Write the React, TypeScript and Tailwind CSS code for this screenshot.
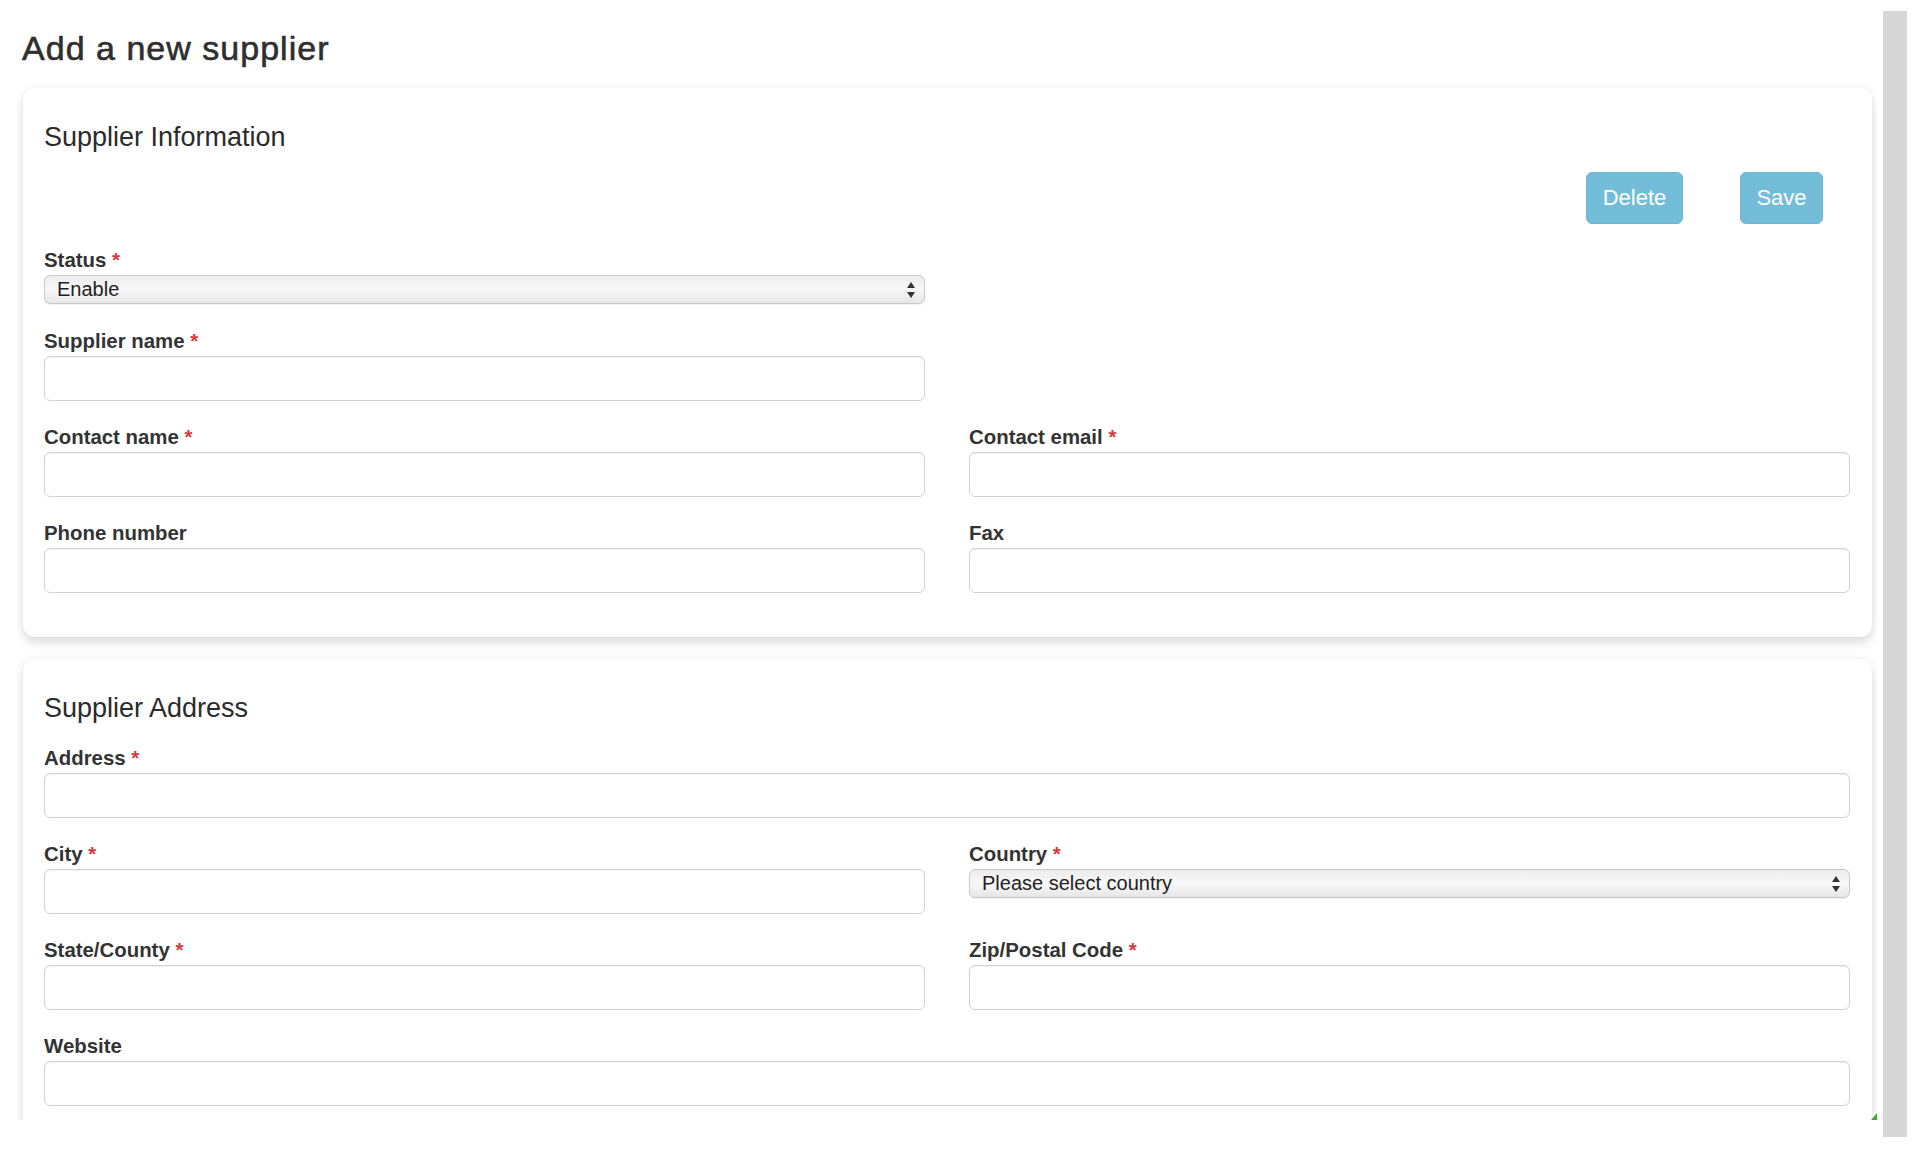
import React from "react";

function Req() {
  return <span className="text-[#d9363e]"> *</span>;
}

function Label({ text, req }: { text: string; req?: boolean }) {
  return (
    <label className="block text-[20.4px] leading-[20px] font-bold text-[#333] mb-[5px]">
      {text}
      {req ? <Req /> : null}
    </label>
  );
}

function TextInput() {
  return (
    <input
      type="text"
      className="block w-full h-[45px] rounded-[6px] border border-[#d2d2d2] bg-white shadow-[inset_0_1px_1px_rgba(0,0,0,0.06)] outline-none px-3 text-[20px]"
    />
  );
}

function FakeSelect({ value }: { value: string }) {
  return (
    <div className="relative w-full h-[29px]">
      <select
        defaultValue={value}
        className="appearance-none block w-full h-[29px] rounded-[6px] border border-[#c9c9c9] bg-linear-to-b from-[#ececec] via-[#f8f8f8] to-[#e6e6e6] shadow-[0_1px_1px_rgba(0,0,0,0.06)] pl-[12px] pr-8 text-[20px] leading-[27px] text-[#222] outline-none"
      >
        <option value={value}>{value}</option>
      </select>
      <svg
        className="absolute right-[10px] top-1/2 -translate-y-1/2 pointer-events-none"
        width="8"
        height="16"
        viewBox="0 0 8 16"
      >
        <polygon points="0,6 4,0 8,6" fill="#333" />
        <polygon points="0,10 8,10 4,16" fill="#333" />
      </svg>
    </div>
  );
}

function Field({
  label,
  req,
  select,
}: {
  label: string;
  req?: boolean;
  select?: string;
}) {
  return (
    <div>
      <Label text={label} req={req} />
      {select ? <FakeSelect value={select} /> : <TextInput />}
    </div>
  );
}

export default function App() {
  return (
    <div className="w-[1918px] h-[1166px] bg-white overflow-hidden font-['Liberation_Sans',Arial,Helvetica,sans-serif] text-[#333]">
      <div className="flex items-start">
        <div className="relative w-[1877px] h-[1120px] overflow-hidden pl-[23px] pr-[5px]">
          <h1 className="-ml-[1px] pt-[31px] text-[34px] leading-[34px] tracking-[0.03em] text-[#2f2f2f] [-webkit-text-stroke:0.6px_#2f2f2f]">
            Add a new supplier
          </h1>

          {/* Supplier Information */}
          <div className="mt-[23px] rounded-[12px] bg-white shadow-[0_0_10px_rgba(0,0,0,0.07),0_7px_10px_rgba(0,0,0,0.10)] pt-[36px] pb-[44px] pl-[21px] pr-[22px]">
            <h2 className="text-[27px] leading-[27px] text-[#2b2b2b]">Supplier Information</h2>
            <div className="mt-[21px] flex justify-end gap-[57px] pr-[27px]">
              <button className="h-[52px] w-[97px] rounded-[6px] bg-[#74bdd9] border border-[#6fb8d5] text-white text-[22px] leading-none">
                Delete
              </button>
              <button className="h-[52px] w-[83px] rounded-[6px] bg-[#74bdd9] border border-[#6fb8d5] text-white text-[22px] leading-none">
                Save
              </button>
            </div>
            <div className="mt-[26px] grid grid-cols-2 gap-x-[44px]">
              <Field label="Status" req select="Enable" />
            </div>
            <div className="mt-[27px] grid grid-cols-2 gap-x-[44px]">
              <Field label="Supplier name" req />
            </div>
            <div className="mt-[26px] grid grid-cols-2 gap-x-[44px]">
              <Field label="Contact name" req />
              <Field label="Contact email" req />
            </div>
            <div className="mt-[26px] grid grid-cols-2 gap-x-[44px]">
              <Field label="Phone number" />
              <Field label="Fax" />
            </div>
          </div>

          {/* Supplier Address */}
          <div className="mt-[22px] rounded-[12px] bg-white shadow-[0_0_10px_rgba(0,0,0,0.07),0_7px_10px_rgba(0,0,0,0.10)] pt-[36px] pb-[44px] pl-[21px] pr-[22px]">
            <h2 className="text-[27px] leading-[27px] text-[#2b2b2b]">Supplier Address</h2>
            <div className="mt-[26px]">
              <Field label="Address" req />
            </div>
            <div className="mt-[26px] grid grid-cols-2 gap-x-[44px] items-start">
              <Field label="City" req />
              <Field label="Country" req select="Please select country" />
            </div>
            <div className="mt-[26px] grid grid-cols-2 gap-x-[44px]">
              <Field label="State/County" req />
              <Field label="Zip/Postal Code" req />
            </div>
            <div className="mt-[26px]">
              <Field label="Website" />
            </div>
          </div>

          <svg className="absolute right-0 bottom-0" width="6" height="7" viewBox="0 0 6 7">
            <polygon points="6,0 6,7 0,7" fill="#3fa83a" />
          </svg>
        </div>
        <div className="ml-[6px] mt-[11px] w-[24px] h-[1126px] bg-[#d6d6d6]" />
      </div>
    </div>
  );
}
